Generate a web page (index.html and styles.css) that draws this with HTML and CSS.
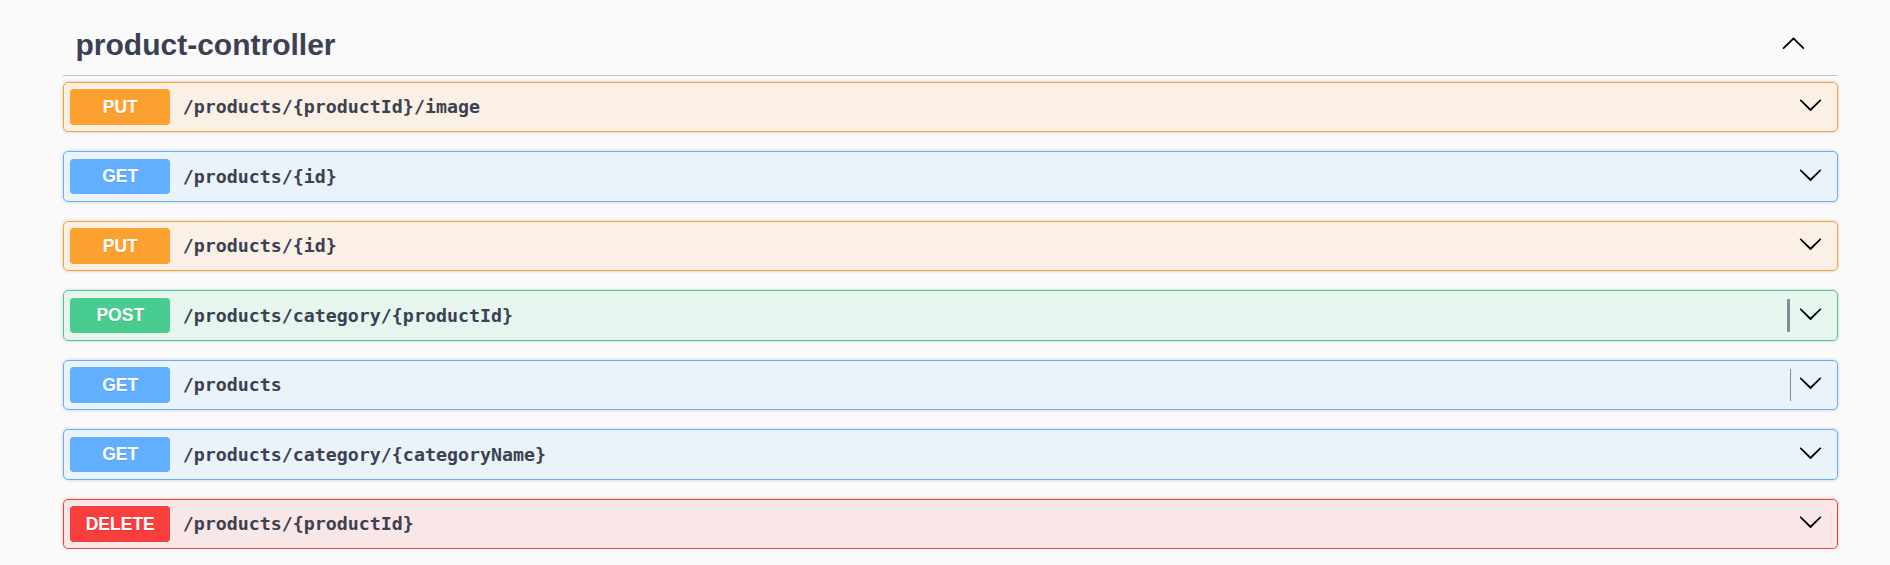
FILE: index.html
```html
<!DOCTYPE html>
<html lang="en">
<head>
<meta charset="utf-8">
<title>product-controller</title>
<link rel="stylesheet" href="styles.css">
</head>
<body>
<div class="wrap">
  <section class="tag-section">
    <h3 class="tag">
      <span class="tag-name">product-controller</span>
      <svg class="arrow arrow-up" viewBox="0 0 20 20" width="25" height="25" aria-hidden="true"><path d="M 17.418 14.908 C 17.69 15.176 18.127 15.176 18.397 14.908 C 18.667 14.64 18.668 14.207 18.397 13.939 L 10.489 6.109 C 10.219 5.841 9.782 5.841 9.51 6.109 L 1.602 13.939 C 1.332 14.207 1.332 14.64 1.602 14.908 C 1.873 15.176 2.311 15.176 2.581 14.908 L 10 7.767 L 17.418 14.908 Z"/></svg>
    </h3>
    <div class="ops">
      <div class="op op-put">
        <span class="method">PUT</span>
        <span class="path">/products/{productId}/image</span>
        <svg class="arrow" viewBox="0 0 20 20" width="25" height="25" aria-hidden="true"><path d="M17.418 6.109c.272-.268.709-.268.979 0s.271.701 0 .969l-7.908 7.83c-.27.268-.707.268-.979 0l-7.908-7.83c-.27-.268-.27-.701 0-.969.271-.268.709-.268.979 0L10 13.25l7.418-7.141z"/></svg>
      </div>
      <div class="op op-get">
        <span class="method">GET</span>
        <span class="path">/products/{id}</span>
        <svg class="arrow" viewBox="0 0 20 20" width="25" height="25" aria-hidden="true"><path d="M17.418 6.109c.272-.268.709-.268.979 0s.271.701 0 .969l-7.908 7.83c-.27.268-.707.268-.979 0l-7.908-7.83c-.27-.268-.27-.701 0-.969.271-.268.709-.268.979 0L10 13.25l7.418-7.141z"/></svg>
      </div>
      <div class="op op-put">
        <span class="method">PUT</span>
        <span class="path">/products/{id}</span>
        <svg class="arrow" viewBox="0 0 20 20" width="25" height="25" aria-hidden="true"><path d="M17.418 6.109c.272-.268.709-.268.979 0s.271.701 0 .969l-7.908 7.83c-.27.268-.707.268-.979 0l-7.908-7.83c-.27-.268-.27-.701 0-.969.271-.268.709-.268.979 0L10 13.25l7.418-7.141z"/></svg>
      </div>
      <div class="op op-post">
        <span class="method">POST</span>
        <span class="path">/products/category/{productId}</span>
        <span class="divider divider-thick"></span>
        <svg class="arrow" viewBox="0 0 20 20" width="25" height="25" aria-hidden="true"><path d="M17.418 6.109c.272-.268.709-.268.979 0s.271.701 0 .969l-7.908 7.83c-.27.268-.707.268-.979 0l-7.908-7.83c-.27-.268-.27-.701 0-.969.271-.268.709-.268.979 0L10 13.25l7.418-7.141z"/></svg>
      </div>
      <div class="op op-get">
        <span class="method">GET</span>
        <span class="path">/products</span>
        <span class="divider"></span>
        <svg class="arrow" viewBox="0 0 20 20" width="25" height="25" aria-hidden="true"><path d="M17.418 6.109c.272-.268.709-.268.979 0s.271.701 0 .969l-7.908 7.83c-.27.268-.707.268-.979 0l-7.908-7.83c-.27-.268-.27-.701 0-.969.271-.268.709-.268.979 0L10 13.25l7.418-7.141z"/></svg>
      </div>
      <div class="op op-get">
        <span class="method">GET</span>
        <span class="path">/products/category/{categoryName}</span>
        <svg class="arrow" viewBox="0 0 20 20" width="25" height="25" aria-hidden="true"><path d="M17.418 6.109c.272-.268.709-.268.979 0s.271.701 0 .969l-7.908 7.83c-.27.268-.707.268-.979 0l-7.908-7.83c-.27-.268-.27-.701 0-.969.271-.268.709-.268.979 0L10 13.25l7.418-7.141z"/></svg>
      </div>
      <div class="op op-delete">
        <span class="method">DELETE</span>
        <span class="path">/products/{productId}</span>
        <svg class="arrow" viewBox="0 0 20 20" width="25" height="25" aria-hidden="true"><path d="M17.418 6.109c.272-.268.709-.268.979 0s.271.701 0 .969l-7.908 7.83c-.27.268-.707.268-.979 0l-7.908-7.83c-.27-.268-.27-.701 0-.969.271-.268.709-.268.979 0L10 13.25l7.418-7.141z"/></svg>
      </div>
    </div>
  </section>
</div>
</body>
</html>
```
FILE: styles.css
```css
html, body {
  margin: 0;
  padding: 0;
}

body {
  background: #fafafa;
  font-family: "Liberation Sans", Arial, sans-serif;
  color: #3b4151;
}

.wrap {
  margin-left: 63px;
  width: 1775px;
  padding-top: 15px;
}

.tag {
  display: flex;
  align-items: center;
  margin: 0 0 6.25px;
  padding: 12.5px 25px 12.5px 12.5px;
  border-bottom: 1px solid rgba(59, 65, 81, 0.3);
  font-size: 30px;
  font-weight: 700;
  line-height: 34.5px;
  color: #3b4151;
}

.tag-name {
  flex: 1;
}

.arrow {
  flex-shrink: 0;
  fill: #000;
}

.arrow-up {
  margin-right: 7px;
  margin-bottom: 5px;
}

.ops {
  display: flex;
  flex-direction: column;
  gap: 19.25px;
}

.op {
  display: flex;
  align-items: center;
  padding: 6.25px;
  border: 1px solid;
  border-radius: 5px;
  box-shadow: 0 0 3.75px rgba(0, 0, 0, 0.19);
}

.op .arrow {
  margin-right: 7.5px;
  margin-bottom: 4px;
}

.method {
  flex-shrink: 0;
  min-width: 100px;
  padding: 7.5px 0;
  border-radius: 3.75px;
  font-size: 17.5px;
  line-height: 20.75px;
  font-weight: 700;
  text-align: center;
  color: #fff;
  text-shadow: 0 1.25px 0 rgba(0, 0, 0, 0.1);
}

.path {
  flex: 1;
  padding: 0 12.5px;
  font-family: "DejaVu Sans Mono", "Liberation Mono", monospace;
  font-size: 18.3px;
  font-weight: 700;
  color: #3b4151;
}

.divider {
  flex-shrink: 0;
  width: 1px;
  height: 32.5px;
  margin-right: 7px;
  background: #80859a;
}

.divider-thick {
  width: 2.7px;
  margin-right: 8.3px;
  border-radius: 1px;
  background: #868b97;
}

.op-put {
  border-color: #fca130;
  background: rgba(252, 161, 48, 0.1);
}
.op-put .method {
  background: #fca130;
}

.op-get {
  border-color: #61affe;
  background: rgba(97, 175, 254, 0.1);
}
.op-get .method {
  background: #61affe;
}

.op-post {
  border-color: #49cc90;
  background: rgba(73, 204, 144, 0.1);
}
.op-post .method {
  background: #49cc90;
}

.op-delete {
  border-color: #f93e3e;
  background: rgba(249, 62, 62, 0.1);
}
.op-delete .method {
  background: #f93e3e;
}
```
